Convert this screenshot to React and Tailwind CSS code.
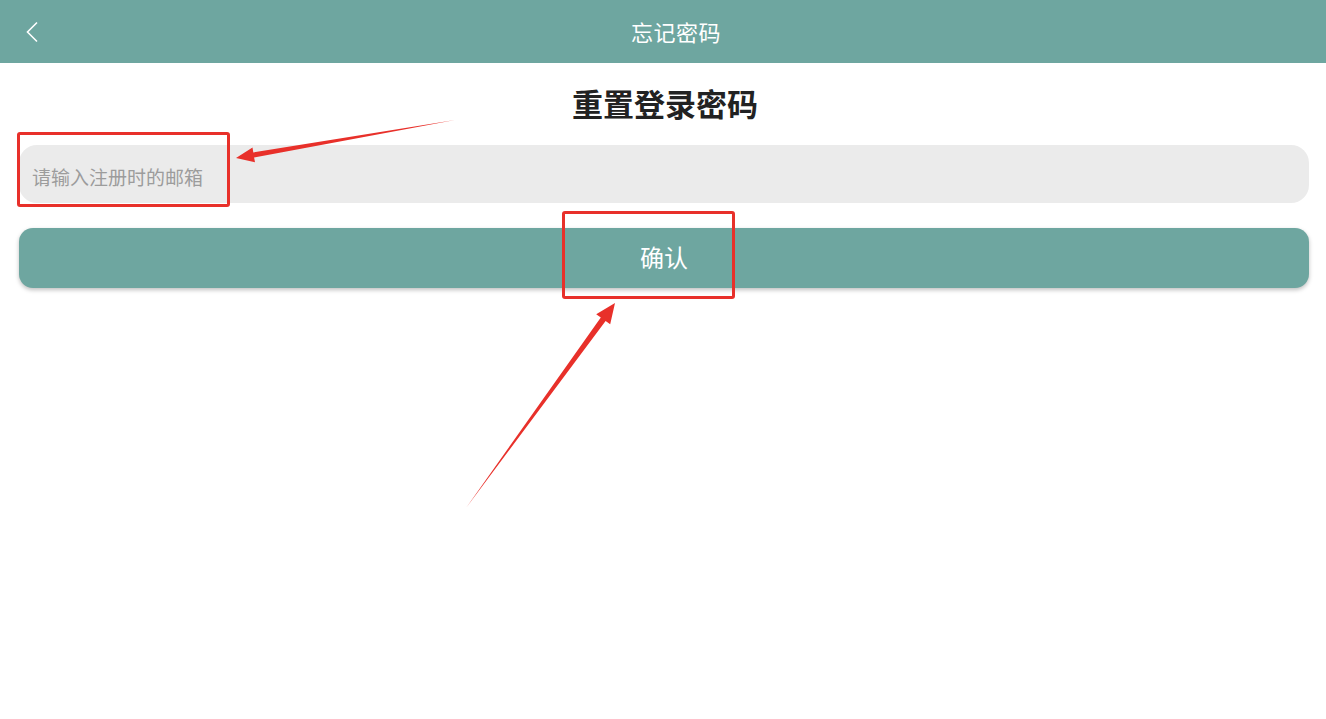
import React from 'react';

const Annotations = () => {
  return (
    <>
      {/* red highlight boxes */}
      <div className="absolute left-[17px] top-[132px] w-[213px] h-[75px] border-[3px] border-[#e8302a] rounded-[3px] pointer-events-none" />
      <div className="absolute left-[562px] top-[211px] w-[173px] h-[88px] border-[3px] border-[#e8302a] rounded-[3px] pointer-events-none" />

      {/* arrows */}
      <svg
        className="absolute left-0 top-0 pointer-events-none"
        width="1326"
        height="719"
        viewBox="0 0 1326 719"
      >
        <polygon
          fill="#e8302a"
          points="455,120 253.3,152.4 252.5,147.5 236,158 255,162.3 254.1,157.4"
        />
        <polygon
          fill="#e8302a"
          points="466,508 600.8,317.4 596.2,314.2 615,303 610.2,324.2 605.6,321"
        />
      </svg>
    </>
  );
};

const App = () => {
  return (
    <div
      className="relative w-full min-h-screen bg-white overflow-hidden"
      style={{ fontFamily: '"Noto Sans CJK SC", "Noto Sans", sans-serif' }}
    >
      {/* Header */}
      <header className="h-[63px] bg-[#6ea6a0] flex items-center pl-[20px] pr-[18px]">
        <button className="w-[24px] h-[32px] flex items-center justify-center">
          <svg width="14" height="22" viewBox="0 0 14 22" fill="none">
            <path d="M12 1.5 L2.5 11 L12 20.5" stroke="#fff" strokeWidth="1.6" strokeLinejoin="miter" />
          </svg>
        </button>
        <h1 className="flex-1 text-center text-[22px] leading-none text-white tracking-[0.5px] pb-[2px]">
          忘记密码
        </h1>
      </header>

      {/* Content */}
      <main className="pl-[19px] pr-[17px]">
        <h2 className="mt-[24px] text-center text-[31px] leading-none font-bold text-[#222] pl-[2px]">
          重置登录密码
        </h2>

        <input
          type="email"
          placeholder="请输入注册时的邮箱"
          className="mt-[27px] block w-full h-[58px] rounded-[18px] bg-[#ebebeb] pl-[13px] pt-[4px] text-[19px] text-[#333] outline-none placeholder:text-[#9c9c9c]"
        />

        <button className="mt-[25px] w-full h-[60px] rounded-[14px] bg-[#6ea6a0] text-white text-[24px] pb-[3px] shadow-[0_2px_4px_rgba(0,0,0,0.25)] flex items-center justify-center">
          确认
        </button>
      </main>

      <Annotations />
    </div>
  );
};

export default App;
